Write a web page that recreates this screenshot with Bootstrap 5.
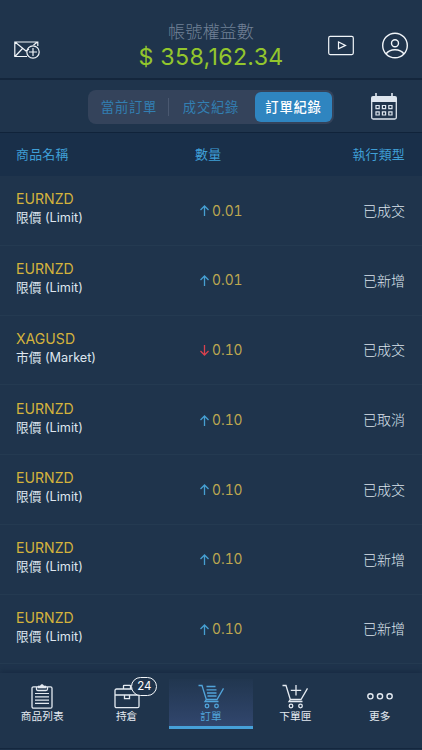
<!DOCTYPE html>
<html lang="zh-Hant">
<head>
<meta charset="utf-8">
<meta name="viewport" content="width=device-width, initial-scale=1">
<title>訂單紀錄</title>
<link href="https://cdn.jsdelivr.net/npm/bootstrap@5.3.0/dist/css/bootstrap.min.css" rel="stylesheet">
<style>
body{background:#1f344c;color:#dde5ee;font-family:Inter,"Noto Sans CJK TC",sans-serif;height:750px;overflow:hidden}
svg{fill:none;stroke:currentColor;display:block;overflow:visible;flex:none}
.topbar{height:80px;border-bottom:2px solid #14263c;padding:22px 14px 0;color:#f1f5f9}
.side-l{width:90px;padding-top:19px}
.side-r{width:90px;padding-top:10px;gap:28px}
.equity-label{font-size:17.2px;line-height:20px;color:#718196;font-weight:300}
.equity-value{font-size:23.2px;line-height:30px;color:#93c62d;white-space:nowrap;letter-spacing:.3px}
.filterbar{height:53px;border-bottom:1px solid #10233a;padding:10px 25px 0 88px}
.seg{width:246px;height:34px;background:#34435b;border-radius:8px;padding:2px}
.seg button{font-size:13.3px;letter-spacing:.8px;line-height:30px;padding:0;border:0;color:#327fb2;height:30px;border-radius:6px;width:78px}
.seg button:nth-of-type(2){width:84px}
.seg button.on{background:#2f85c0;color:#fff;font-weight:500;width:77px;margin-left:auto}
.seg .rule{width:1px;height:18px;background:#4a5870}
.cells{display:grid;grid-template-columns:179px 1fr 1fr;align-items:center;padding:0 17px 0 16px}
.thead-row{height:43px;background:#192f49;color:#3f9fd6;font-size:12.9px;letter-spacing:.25px}
.order-row{height:69.75px;border-bottom:1px solid #243a51}
.names{padding-bottom:3px}
.sym{font-size:14.1px;line-height:18px;color:#d4b33c}
.kind{font-size:12.7px;line-height:19px;white-space:nowrap}
.qty{font-size:13.8px;color:#bda750;gap:3px;padding-left:5px;padding-top:1px;font-variant-numeric:tabular-nums}
.up{color:#469fd2}.down{color:#d9414e}
.state{font-size:14px;font-weight:300}
.tabbar{margin-top:8.75px;height:76px;box-shadow:0 -2px 5px #182b43;border-bottom:1px solid #14273e;padding-top:6px}
.tabbar a{color:#e4eaf1;width:84.4px;height:50px;text-decoration:none;font-size:10.7px;line-height:14px;padding-top:5px}
.tabbar svg{margin-bottom:1px}
.tabbar a.on{color:#51a4da;background:linear-gradient(#21364f,#31466d);border-bottom:3px solid #46a0d8}
.count{position:absolute;left:47px;top:-2px;height:19px;width:26px;border:1.3px solid #f4f7fa;border-radius:10px;background:#1f344c;font-size:11.5px;line-height:16px;text-align:center;color:#fff}
</style>
<script src="https://cdn.jsdelivr.net/npm/bootstrap@5.3.0/dist/js/bootstrap.bundle.min.js"></script>
</head>
<body>
<header class="topbar d-flex justify-content-between">
  <div class="side-l">
    <svg width="26" height="18" viewBox="0 0 26 18" stroke-width="1.2"><path d="M13 15.500H.8V1h23v4M1 1l11 9 3-2M23.500 1l-4 3M1 15.500l7.500-8"/><circle cx="19" cy="11" r="6.200"/><path d="M19 7v8M15 11h8"/></svg>
  </div>
  <div class="text-center">
    <div class="equity-label">帳號權益數</div>
    <div class="equity-value">$ 358,162.34</div>
  </div>
  <div class="side-r d-flex justify-content-end align-items-start">
    <svg class="mt-1" width="26" height="20" viewBox="0 0 26 20" stroke-width="1.2"><rect x=".7" y=".4" width="24.600" height="18.200" rx="1.500"/><path d="M10.500 6v6.800l7-3.400z"/></svg>
    <svg width="26" height="27" viewBox="0 0 26 27" stroke-width="1.4"><circle cx="13" cy="13.500" r="12.300"/><circle cx="13" cy="11.300" r="3.500"/><path d="M4 22c2-3 5-4.300 9-4.300s7 1.300 9 4.300"/></svg>
  </div>
</header>
<div class="filterbar d-flex justify-content-between align-items-start">
  <div class="seg d-flex align-items-center">
    <button class="btn">當前訂單</button><span class="rule"></span><button class="btn">成交紀錄</button><button class="btn on">訂單紀錄</button>
  </div>
  <svg class="mt-1" width="26" height="26" viewBox="0 0 26 26"><path d="M.7 6v17.500q0 1.500 1.500 1.500h21.600q1.500 0 1.500-1.500V6" stroke-width="1.300"/><path d="M0 8V4q0-2 2-2h22q2 0 2 2v4z" fill="currentColor" stroke="none"/><path d="M5 -1v5M21 -1v5" stroke-width="1.600"/><g stroke-width="1.200"><path d="M5 11.500h3.200v3.200H5zM11.400 11.500h3.200v3.200h-3.200zM17.800 11.500H21v3.200h-3.200zM5 17.800h3.200V21H5zM11.400 17.800h3.200V21h-3.200zM17.800 17.800H21V21h-3.200z"/></g></svg>
</div>
<div class="cells thead-row"><span>商品名稱</span><span>數量</span><span class="text-end">執行類型</span></div>
<main id="orders"></main>
<nav class="tabbar d-flex">
  <a href="#" class="d-flex flex-column align-items-center">
    <svg width="22" height="25" viewBox="0 0 22 25" stroke-width="1.300"><rect x="1" y="2.800" width="20" height="21.400" rx="1.500"/><path d="M5.500 3v2q0 1.500 1.500 1.500h8q1.500 0 1.500-1.500V3" /><path d="M4 9.500h14M4 12.800h14M4 16.100h14M4 19.400h14" stroke-width="1.200"/><path d="M7 4V2h2.300Q9.500.5 11 .5T12.700 2H15v2z" fill="currentColor" stroke-width=".6"/></svg>商品列表</a>
  <a href="#" class="d-flex flex-column align-items-center position-relative">
    <svg width="26" height="25" viewBox="0 0 26 25" stroke-width="1.300"><rect x="1" y="5" width="24" height="18.700" rx="1.500"/><path d="M9.500 5V2q0-.7.700-.7h5.600q.7 0 .7.700v3M1 11h24M10.500 11.500v3.200h5v-3.200"/></svg>持倉<span class="count">24</span></a>
  <a href="#" class="on d-flex flex-column align-items-center">
    <svg width="26" height="25" viewBox="0 0 26 25" stroke-width="1.300"><path d="M.5 1.500H4l4.300 14L7 17.500h13.500M8 15.500h11L25.500 4.300M8.500 2.500h9M8.500 5.800h10M9 9h9.500M9.500 12h9"/><circle cx="9" cy="22" r="1.800"/><circle cx="18.500" cy="22" r="1.800"/></svg>訂單</a>
  <a href="#" class="d-flex flex-column align-items-center">
    <svg width="26" height="25" viewBox="0 0 26 25" stroke-width="1.300"><path d="M.5 1.500H4l4.300 14L7 17.500h13.500M8 15.500h11L25.500 4.300M14 1v10.500M8.800 6.300h10.400"/><circle cx="9" cy="22" r="1.800"/><circle cx="18.500" cy="22" r="1.800"/></svg>下單匣</a>
  <a href="#" class="d-flex flex-column align-items-center">
    <svg width="26" height="25" viewBox="0 0 26 25" stroke-width="1.400"><circle cx="3.400" cy="12.300" r="2.600"/><circle cx="13" cy="12.300" r="2.600"/><circle cx="22.600" cy="12.300" r="2.600"/></svg>更多</a>
</nav>
<script>
const orders=[["EURNZD","限價 (Limit)",1,"0.01","已成交"],["EURNZD","限價 (Limit)",1,"0.01","已新增"],["XAGUSD","市價 (Market)",0,"0.10","已成交"],["EURNZD","限價 (Limit)",1,"0.10","已取消"],["EURNZD","限價 (Limit)",1,"0.10","已成交"],["EURNZD","限價 (Limit)",1,"0.10","已新增"],["EURNZD","限價 (Limit)",1,"0.10","已新增"]];
document.getElementById("orders").innerHTML=orders.map(([s,k,up,q,st])=>`<div class="cells order-row"><div class="names"><div class="sym">${s}</div><div class="kind">${k}</div></div><div class="qty d-flex align-items-center"><svg class="${up?"up":"down"}" width="9" height="11" viewBox="0 0 9 11" stroke-width="1.300"><path d="${up?"M4.500 11V1M.5 5l4-4 4 4":"M4.500 0v10M.5 6l4 4 4-4"}"/></svg>${q}</div><div class="state text-end">${st}</div></div>`).join("");
</script>
</body>
</html>
